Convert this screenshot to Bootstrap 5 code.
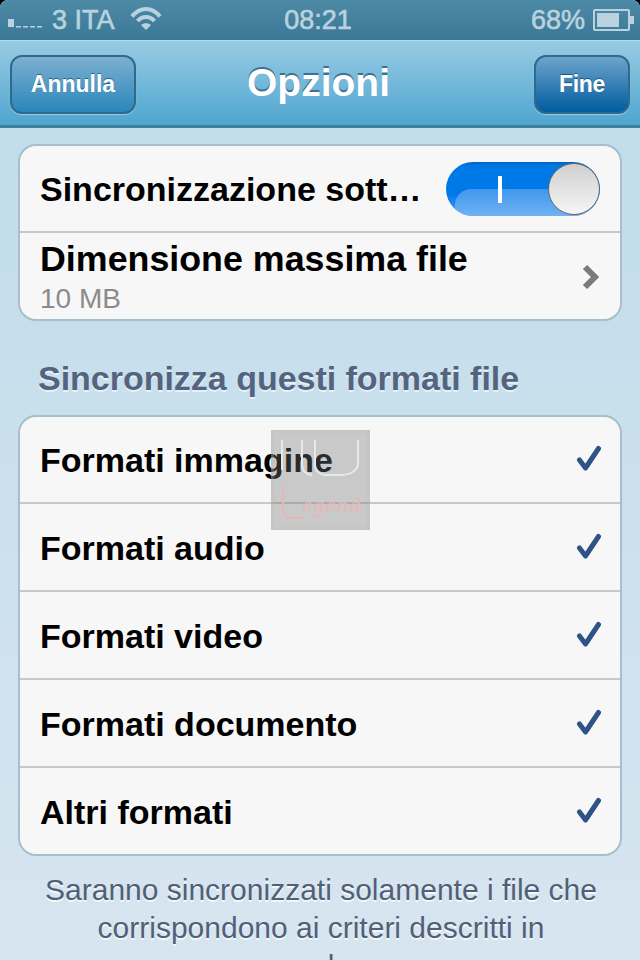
<!DOCTYPE html>
<html lang="it">
<head>
<meta charset="utf-8">
<title>Opzioni</title>
<link href="https://cdn.jsdelivr.net/npm/bootstrap@5.3.0/dist/css/bootstrap.min.css" rel="stylesheet">
<style>
html,body{margin:0;height:960px;overflow:hidden;background:#000}
body{font-family:"Liberation Sans",Arial,sans-serif;color:#000}
.phone{position:relative;width:640px;height:960px;overflow:hidden;border-radius:8px 8px 0 0;display:flex;flex-direction:column;background:linear-gradient(#bedbea,#d7e5f0)}
.sbar{height:40px;flex:none;background:linear-gradient(#4d8aa6,#3b7897);color:#b9d2de;font-size:27px;line-height:40px;padding:0 5px 0 8px;position:relative;-webkit-text-stroke:.6px #b9d2de}
.sbar-left{display:flex;align-items:center;gap:6px;height:40px}
.sbar-right{display:flex;align-items:center;gap:8px;height:40px;margin-left:auto}
.sbar-time{position:absolute;left:0;right:0;top:0;text-align:center;margin-left:-4px}
.sig{margin-top:8px}
.wifi{margin-left:9px;margin-top:-2px}
.tbar{height:88px;flex:none;padding:14px 10px 0;background:linear-gradient(#98cbe3 0%,#4fa6d0 96%,#3f7f9e 97%,#3f7f9e 100%);border-top:1px solid #b6dcec;display:block;position:relative}
.tbar-title{position:absolute;left:0;right:0;top:18px;text-align:center;font-size:39px;line-height:48px;font-weight:700;color:#fff;text-shadow:0 -2px 0 #3f6f90;margin:0 0 0 -3px}
.nbtn{height:59px;font-size:23px;font-weight:700;color:#fff;border:2px solid #2f6a8d;border-radius:12px;line-height:49px;padding:0;text-shadow:0 -1px 0 rgba(0,50,90,.6);box-shadow:0 1px 1px rgba(255,255,255,.4)}
.nbtn:hover,.nbtn:active{color:#fff;border-color:#2f6a8d}
.nbtn-cancel{width:126px;background:linear-gradient(#7db0cf,#2a86bb)}
.nbtn-done{width:96px;background:linear-gradient(#6da4cb,#005c9f);letter-spacing:-.3px}
.scroller{padding:16px 18px 0 18px;flex:1}
.grp{border:2px solid #a7bfcd;border-radius:18px;overflow:hidden;background:#f7f7f7;--bs-list-group-bg:#f7f7f7}
.rowx{height:88px;background:#f7f7f7;border:0;border-top:1px solid #fff;border-bottom:2px solid #c8c8c8;padding:1px 18px 0 20px;display:flex;align-items:center;justify-content:space-between;font-size:34px;font-weight:700;line-height:40px;color:#000}
.grp .rowx:last-child{border-bottom:0;height:86px}
.rowx-first{border-top:0;height:87px}
.stack{display:flex;flex-direction:column;margin-top:1px}
.lbl1{font-size:35.8px}
.lbl2{font-size:28px;font-weight:400;color:#8b8b8b;line-height:32px;margin-top:4px}
.swt{width:154px;height:54px;position:relative;border-radius:27px;background:linear-gradient(#0062c4 0,#0079e8 8%,#0079e8 60%,#4d9fee 100%);margin:-1px 2px 0 0;overflow:hidden;flex:none}
.swt-gloss{position:absolute;left:9px;right:0;top:27px;bottom:0;border-radius:16px 0 0 0;background:linear-gradient(#3f97ee,#6fb2f2)}
.swt-bar{position:absolute;left:52px;top:14px;width:4px;height:27px;background:#fff}
.swt-knob{position:absolute;right:0;top:1px;width:52px;height:52px;border-radius:50%;border:1px solid #666;background:linear-gradient(#cfcfcf,#f6f6f6)}
.chev{margin-right:2px}
.chk{margin-top:-2px}
.sect{font-size:34px;font-weight:700;color:#546480;text-shadow:0 2px 0 #e6f1f7;margin:37px 0 17px 20px;line-height:40px;letter-spacing:-.02px}
.note{font-size:30px;line-height:38px;color:#515f78;text-shadow:0 2px 0 #f2f7fa;text-align:center;margin:15px 0 0;padding:0 20px 0 22px}
.wmark{position:absolute;left:271px;top:430px;width:99px;height:100px;background:rgba(120,120,120,.36);border:3px solid rgba(190,190,190,.3)}
.wmark-txt{position:absolute;left:28px;top:60px;font-family:"Liberation Serif",serif;font-style:italic;font-size:22px;line-height:24px;letter-spacing:1.5px;color:#e8b6b6}
.wmark svg{position:absolute;left:0;top:0}
</style>
</head>
<body>
<div class="phone">
  <div class="sbar d-flex">
    <div class="sbar-left">
      <svg class="sig" width="38" height="10" viewBox="0 0 38 10" fill="#b9d2de"><rect x="0" y="0" width="6" height="8"/><rect x="8" y="7" width="5" height="1.500"/><rect x="15" y="7" width="5" height="1.500"/><rect x="22" y="7" width="5" height="1.500"/><rect x="29" y="7" width="5" height="1.500"/></svg>
      <span>3 ITA</span>
      <svg class="wifi" width="32" height="24" viewBox="0 0 32 24" fill="none" stroke="#b9d2de" stroke-width="4"><path d="M2 9.500C10-.5 22-.5 30 9.500"/><path d="M7.500 14C12 8.500 20 8.500 24.500 14"/><path d="M16 23l-5-5c3-2.500 7-2.500 10 0z" fill="#b9d2de" stroke="none"/></svg>
    </div>
    <div class="sbar-time">08:21</div>
    <div class="sbar-right">
      <span>68%</span>
      <svg width="42" height="22" viewBox="0 0 42 22" fill="none"><rect x="1" y="1" width="35" height="20" stroke="#b9d2de" stroke-width="2" rx="1"/><rect x="4" y="4" width="22" height="14" fill="#b9d2de"/><path d="M37 7h4v8h-4z" fill="#b9d2de"/></svg>
    </div>
  </div>
  <nav class="tbar">
    <div class="d-flex justify-content-between">
      <button type="button" class="btn nbtn nbtn-cancel">Annulla</button>
      <button type="button" class="btn nbtn nbtn-done">Fine</button>
    </div>
    <h1 class="tbar-title">Opzioni</h1>
  </nav>
  <main class="scroller">
    <div class="list-group grp">
      <div class="list-group-item rowx rowx-first"><span>Sincronizzazione sott…</span>
        <div class="swt"><div class="swt-gloss"></div><div class="swt-bar"></div><div class="swt-knob"></div></div>
      </div>
      <div class="list-group-item rowx">
        <div class="stack"><span class="lbl1">Dimensione massima file</span><span class="lbl2">10 MB</span></div>
        <svg class="chev" width="18" height="26" viewBox="0 0 18 26"><path d="M3 3l10 10L3 23" fill="none" stroke="#7b7b7b" stroke-width="6"/></svg>
      </div>
    </div>
    <h2 class="sect">Sincronizza questi formati file</h2>
    <div class="list-group grp">
      <div class="list-group-item rowx rowx-first"><span>Formati immagine</span><svg class="chk" width="26" height="28" viewBox="0 0 26 28"><path d="M3.500 15l6 8L22.500 3.500" fill="none" stroke="#2f5287" stroke-width="5" stroke-linecap="round" stroke-linejoin="round"/></svg></div>
      <div class="list-group-item rowx"><span>Formati audio</span><svg class="chk" width="26" height="28" viewBox="0 0 26 28"><path d="M3.500 15l6 8L22.500 3.500" fill="none" stroke="#2f5287" stroke-width="5" stroke-linecap="round" stroke-linejoin="round"/></svg></div>
      <div class="list-group-item rowx"><span>Formati video</span><svg class="chk" width="26" height="28" viewBox="0 0 26 28"><path d="M3.500 15l6 8L22.500 3.500" fill="none" stroke="#2f5287" stroke-width="5" stroke-linecap="round" stroke-linejoin="round"/></svg></div>
      <div class="list-group-item rowx"><span>Formati documento</span><svg class="chk" width="26" height="28" viewBox="0 0 26 28"><path d="M3.500 15l6 8L22.500 3.500" fill="none" stroke="#2f5287" stroke-width="5" stroke-linecap="round" stroke-linejoin="round"/></svg></div>
      <div class="list-group-item rowx"><span>Altri formati</span><svg class="chk" width="26" height="28" viewBox="0 0 26 28"><path d="M3.500 15l6 8L22.500 3.500" fill="none" stroke="#2f5287" stroke-width="5" stroke-linecap="round" stroke-linejoin="round"/></svg></div>
    </div>
    <p class="note">Saranno sincronizzati solamente i file che corrispondono ai criteri descritti in precedenza</p>
  </main>
  <div class="wmark">
    <svg width="93" height="94" viewBox="0 0 93 94" fill="none" stroke-width="2"><path d="M8 7v30M28 7v25c0 6 5 10 10 10M41 7v25c0 6 6 10 10 10h15c10 0 18-4 18-12V7" stroke="#e8e8e8"/><path d="M9 52v22c0 7 2 11 8 11h12" stroke="#e8b6b6"/></svg>
    <span class="wmark-txt">egend</span>
  </div>
</div>
</body>
</html>
